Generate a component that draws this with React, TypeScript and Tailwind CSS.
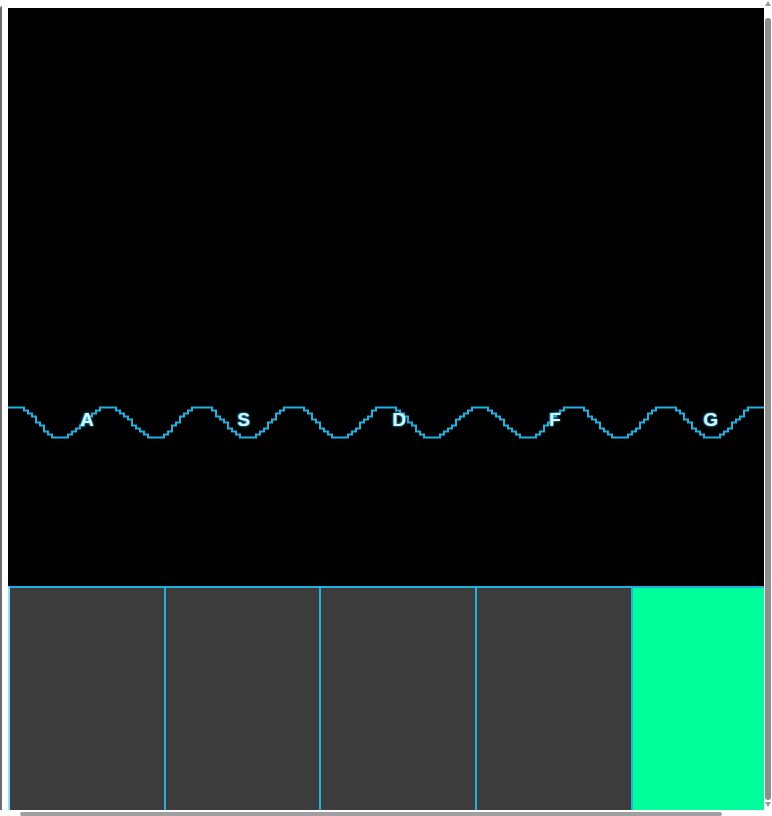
import React from 'react';

const KEYS = ['A', 'S', 'D', 'F', 'G'];
const CANVAS_W = 756;
const CANVAS_H = 578;

// stepped sine, clipped flat at peaks, quantized like a low-res scope
const buildWave = () => {
  const period = 93;
  const phase = 7; // peak offset inside the canvas
  const mid = 413.5;
  const amp = 14.5;
  let d = '';
  let prevY = 0;
  for (let x = 0; x <= CANVAS_W; x += 4) {
    let f = 1.12 * Math.cos((2 * Math.PI * (x + 2 - phase)) / period);
    f = Math.max(-1, Math.min(1, f));
    const y = Math.round((mid - amp * f) / 3) * 3 + 0.5;
    if (x === 0) d += `M0 ${y}`;
    else d += ` V${y}`;
    d += ` H${x + 4}`;
    prevY = y;
  }
  return d + ` V${prevY}`;
};

export default function App() {
  const wave = buildWave();
  return (
    <div className="relative w-[772px] h-[816px] overflow-hidden bg-white font-['Liberation_Sans',Arial,sans-serif]">
      <div className="absolute left-0 top-[6px] w-[2px] h-[810px] bg-[#6b6b6b] rounded-tl" />
      <div className="pl-2 pt-2 w-[800px]">
        <div className="relative w-[756px] h-[578px] bg-black">
          <svg width={CANVAS_W} height={CANVAS_H} className="block">
            <path d={wave} fill="none" stroke="#1fb2e0" strokeWidth="2" />
          </svg>
          <div className="absolute left-0 top-[402px] flex">
            {KEYS.map((k, i) => (
              <div
                key={k}
                className={`${i === 0 ? 'w-[157.7px]' : 'w-[155.7px]'} text-center text-[19px] font-bold leading-none text-[#d6f6ff] [text-shadow:0_0_3px_#1fb2e0,0_0_1px_#1fb2e0]`}
              >
                {k}
              </div>
            ))}
          </div>
        </div>
        <div className="flex">
          {KEYS.map((k, i) => (
            <div
              key={k}
              className={`h-[240px] shrink-0 border-t-2 border-r-2 border-[#1fb2e0] ${
                i === 0 ? 'w-[157.7px] border-l-2 border-l-[#7ee6ff]' : 'w-[155.7px]'
              } ${i === KEYS.length - 1 ? 'bg-[#00ff9a]' : 'bg-[#3c3c3c]'}`}
            />
          ))}
        </div>
      </div>

      {/* fake scrollbars */}
      <div className="absolute right-0 top-0 w-[8px] h-[810px] bg-white">
        <div className="mx-auto mt-[1px] w-0 h-0 border-l-[3px] border-r-[3px] border-b-[5px] border-l-transparent border-r-transparent border-b-[#9a9a9a]" />
        <div className="ml-[1px] mt-[12px] w-[6px] h-[782px] rounded-full bg-[#8e8e8e]" />
        <div className="mx-auto mt-[2px] w-0 h-0 border-l-[3px] border-r-[3px] border-t-[5px] border-l-transparent border-r-transparent border-t-[#9a9a9a]" />
      </div>
      <div className="absolute left-0 bottom-0 w-[772px] h-[6px] bg-white">
        <div className="ml-[20px] mt-[2px] w-[702px] h-[4px] rounded-full bg-[#a0a0a0]" />
      </div>
    </div>
  );
}
